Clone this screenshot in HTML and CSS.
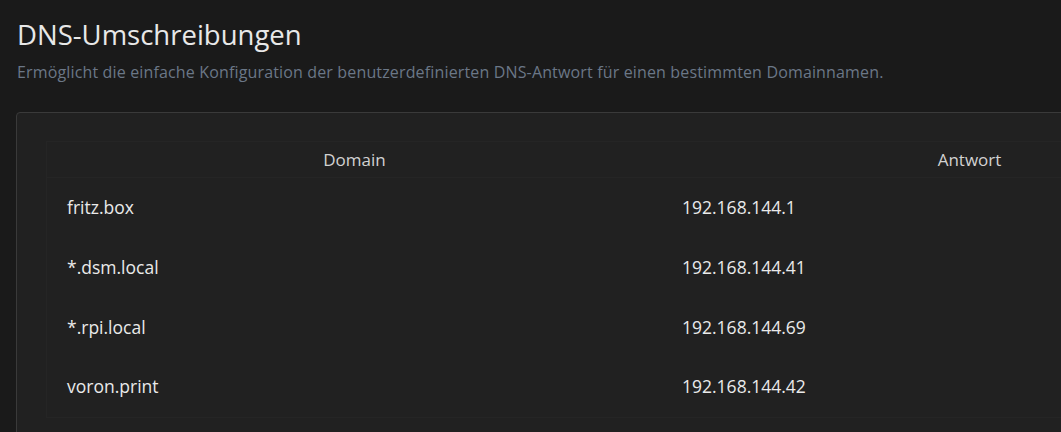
FILE: index.html
```html
<!DOCTYPE html>
<html lang="de">
<head>
<meta charset="utf-8">
<title>DNS-Umschreibungen</title>
<link rel="stylesheet" href="styles.css">
</head>
<body>
<main class="page">
  <header class="page-head">
    <h1 class="title">DNS-Umschreibungen</h1>
    <p class="subtitle">Ermöglicht die einfache Konfiguration der benutzerdefinierten DNS-Antwort für einen bestimmten Domainnamen.</p>
  </header>
  <section class="card">
    <table class="rewrites">
      <thead>
        <tr><th>Domain</th><th>Antwort</th></tr>
      </thead>
      <tbody>
        <tr><td>fritz.box</td><td>192.168.144.1</td></tr>
        <tr><td>*.dsm.local</td><td>192.168.144.41</td></tr>
        <tr><td>*.rpi.local</td><td>192.168.144.69</td></tr>
        <tr><td>voron.print</td><td>192.168.144.42</td></tr>
      </tbody>
    </table>
  </section>
</main>
</body>
</html>
```

FILE: styles.css
```css
html, body {
  margin: 0;
  padding: 0;
  background: #1a1a1a;
  overflow: hidden;
}

body {
  font-family: "Open Sans", "Noto Sans", sans-serif;
  color: #e6e6e6;
}

.page {
  padding: 15px 0 0 16px;
}

.page-head {
  padding-left: 1px;
}

.title {
  margin: 0;
  font-size: 27.5px;
  font-weight: 400;
  line-height: 40px;
  color: #e8e8e8;
  letter-spacing: 0;
}

.subtitle {
  margin: 5px 0 0;
  font-size: 16px;
  line-height: 24px;
  letter-spacing: 0.15px;
  color: #6b7787;
}

.card {
  margin-top: 28px;
  width: 1300px;
  height: 340px;
  box-sizing: border-box;
  background: #212121;
  border: 1px solid #3a3a3a;
  border-radius: 4px;
  padding: 28px 0 0 29px;
}

.rewrites {
  width: 1232px;
  border-collapse: collapse;
  table-layout: fixed;
  border: 1px solid #252525;
}

.rewrites th {
  height: 35px;
  font-weight: 400;
  font-size: 17px;
  color: #d2d2d2;
  text-align: center;
  padding: 0;
  border-bottom: 1px solid #252525;
}

.rewrites td {
  height: 60px;
  padding: 0 0 2px 20px;
  box-sizing: border-box;
  font-size: 17.5px;
  color: #eaeaea;
  text-align: left;
}
```
